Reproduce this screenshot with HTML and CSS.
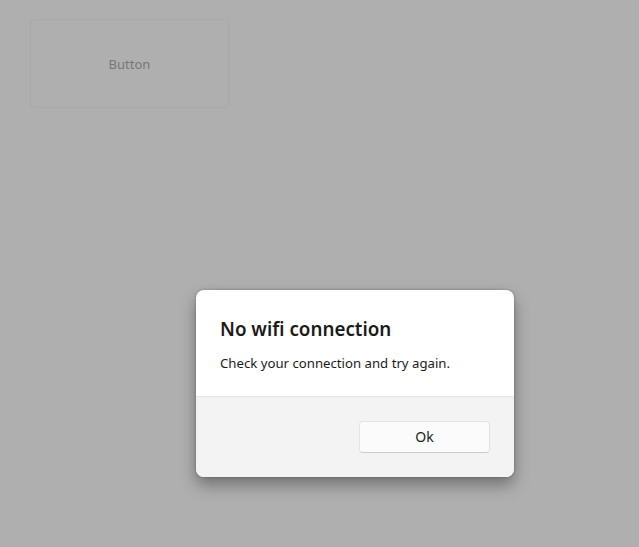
FILE: index.html
```html
<!DOCTYPE html>
<html>
<head>
<meta charset="utf-8">
<link rel="stylesheet" href="styles.css">
</head>
<body>
<div class="page">
  <button class="page-button">Button</button>
</div>
<div class="overlay">
  <div class="dialog">
    <div class="dialog-content">
      <h1 class="dialog-title">No wifi connection</h1>
      <p class="dialog-text">Check your connection and try again.</p>
    </div>
    <div class="dialog-footer">
      <button class="dialog-button">Ok</button>
    </div>
  </div>
</div>
</body>
</html>
```

FILE: styles.css
```css
html, body {
  margin: 0;
  height: 100%;
}
body {
  background: #afafaf;
  font-family: "Segoe UI", "Noto Sans", "Open Sans", sans-serif;
  position: relative;
  overflow: hidden;
}
.page {
  padding: 19px 0 0 30px;
}
.page-button {
  width: 199px;
  height: 89px;
  background: #afafaf;
  border: 1px solid #a9a9a9;
  border-radius: 4px;
  color: #777777;
  font-family: inherit;
  font-size: 13px;
  padding: 0;
}
.overlay {
  position: absolute;
  inset: 0;
  display: flex;
  align-items: flex-start;
  justify-content: flex-start;
  padding: 290px 0 0 196px;
}
.dialog {
  width: 318px;
  border-radius: 8px;
  overflow: hidden;
  background: #ffffff;
  box-shadow: 0 8px 16px rgba(0,0,0,0.35), 0 0 3px rgba(0,0,0,0.25);
}
.dialog-content {
  padding: 25px 24px 23px;
  border-bottom: 1px solid #e6e6e6;
}
.dialog-title {
  margin: 0;
  font-size: 18.8px;
  line-height: 28px;
  font-weight: 600;
  color: #1b1b1b;
}
.dialog-text {
  margin: 10px 0 0;
  font-size: 13.2px;
  line-height: 20px;
  color: #1b1b1b;
}
.dialog-footer {
  background: #f3f3f3;
  padding: 24px;
  display: flex;
  justify-content: flex-end;
}
.dialog-button {
  width: 131px;
  height: 32px;
  background: #fbfbfb;
  border: 1px solid #e3e3e3;
  border-bottom-color: #cccccc;
  border-radius: 4px;
  font-family: inherit;
  font-size: 14px;
  line-height: 28px;
  color: #1b1b1b;
  padding: 0 0 1px;
}
```
